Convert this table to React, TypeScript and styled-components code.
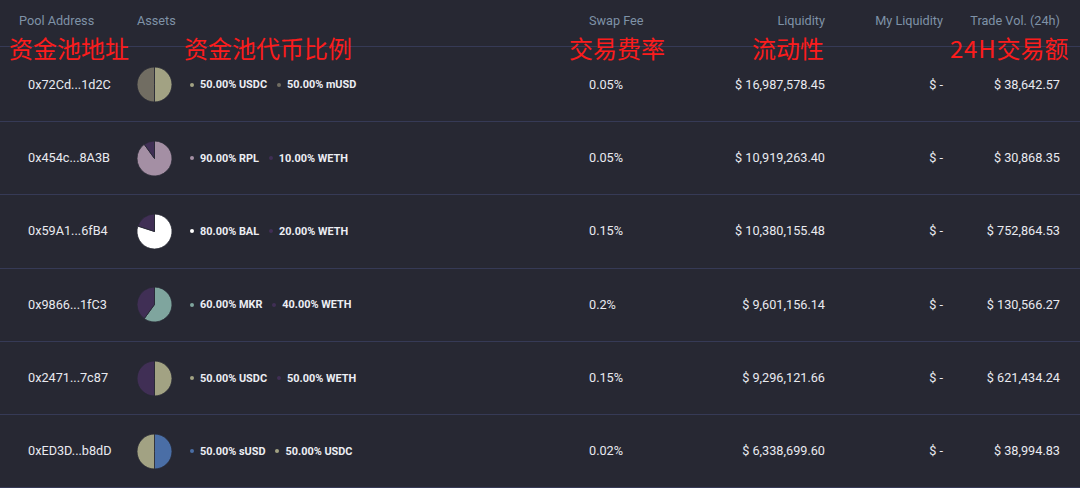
import React from "react";
import styled, { createGlobalStyle } from "styled-components";

const GlobalStyle = createGlobalStyle`
  html, body { margin: 0; padding: 0; background: #272833; }
  body { font-family: Roboto, "Noto Sans", sans-serif; -webkit-font-smoothing: antialiased; }
`;

const COLS = "137px 452px 111px 125px 118px 117px 20px";

const Page = styled.div`
  position: relative;
  width: 1080px;
  height: 488px;
  overflow: hidden;
  background: #272833;
`;

const HeaderRow = styled.div`
  display: grid;
  grid-template-columns: ${COLS};
  height: 47px;
  box-sizing: border-box;
  padding-top: 13px;
  border-bottom: 1px solid #363a56;
`;

const HeadCell = styled.div<{ $align?: "left" | "right"; $pad?: number }>`
  font-size: 12.7px;
  line-height: 16px;
  color: #7f92a7;
  text-align: ${(p) => p.$align ?? "left"};
  padding-left: ${(p) => p.$pad ?? 0}px;
  white-space: nowrap;
`;

const Row = styled.div`
  display: grid;
  grid-template-columns: ${COLS};
  align-items: center;
  height: 73.3px;
  box-sizing: border-box;
  border-bottom: 1px solid #363a56;
  ${HeaderRow} + & { height: 75px; padding-top: 1px; }
  &:last-child { border-bottom: none; }
`;

const Cell = styled.div<{ $align?: "left" | "right"; $pad?: number }>`
  font-size: 12.7px;
  line-height: 16px;
  color: #e9eaf0;
  text-align: ${(p) => p.$align ?? "left"};
  padding-left: ${(p) => p.$pad ?? 0}px;
  white-space: nowrap;
`;

const AssetsCell = styled.div`
  display: flex;
  align-items: center;
  gap: 18px;
`;

const Legend = styled.div`
  display: flex;
  align-items: center;
  gap: 10px;
`;

const LegendItem = styled.div`
  display: flex;
  align-items: center;
  gap: 6px;
  font-size: 10.9px;
  font-weight: 700;
  color: #eceef3;
  white-space: nowrap;
`;

const Dot = styled.span<{ $color: string }>`
  width: 4px;
  height: 4px;
  border-radius: 50%;
  background: ${(p) => p.$color};
`;

const Overlay = styled.div`
  position: absolute;
  inset: 0;
  pointer-events: none;
`;

const Note = styled.div<{ $x: number }>`
  position: absolute;
  top: 35px;
  left: ${(p) => p.$x}px;
  font-family: "Noto Sans CJK SC", "Noto Sans", sans-serif;
  font-size: 24px;
  line-height: 26px;
  color: #fb1c1c;
  white-space: nowrap;
`;

const Latin = styled.span`
  letter-spacing: 0.8px;
`;

type Asset = { pct: number; sym: string; color: string };
type Pool = { addr: string; assets: Asset[]; fee: string; liq: string; vol: string };

const C = {
  usdc: "#a2a283",
  musd: "#716d62",
  rpl: "#a48fa4",
  weth: "#402f55",
  bal: "#ffffff",
  mkr: "#7fa59e",
  susd: "#4a6ea6",
};

const pools: Pool[] = [
  { addr: "0x72Cd...1d2C", assets: [{ pct: 50, sym: "USDC", color: C.usdc }, { pct: 50, sym: "mUSD", color: C.musd }], fee: "0.05%", liq: "$ 16,987,578.45", vol: "$ 38,642.57" },
  { addr: "0x454c...8A3B", assets: [{ pct: 90, sym: "RPL", color: C.rpl }, { pct: 10, sym: "WETH", color: C.weth }], fee: "0.05%", liq: "$ 10,919,263.40", vol: "$ 30,868.35" },
  { addr: "0x59A1...6fB4", assets: [{ pct: 80, sym: "BAL", color: C.bal }, { pct: 20, sym: "WETH", color: C.weth }], fee: "0.15%", liq: "$ 10,380,155.48", vol: "$ 752,864.53" },
  { addr: "0x9866...1fC3", assets: [{ pct: 60, sym: "MKR", color: C.mkr }, { pct: 40, sym: "WETH", color: C.weth }], fee: "0.2%", liq: "$ 9,601,156.14", vol: "$ 130,566.27" },
  { addr: "0x2471...7c87", assets: [{ pct: 50, sym: "USDC", color: C.usdc }, { pct: 50, sym: "WETH", color: C.weth }], fee: "0.15%", liq: "$ 9,296,121.66", vol: "$ 621,434.24" },
  { addr: "0xED3D...b8dD", assets: [{ pct: 50, sym: "sUSD", color: C.susd }, { pct: 50, sym: "USDC", color: C.usdc }], fee: "0.02%", liq: "$ 6,338,699.60", vol: "$ 38,994.83" },
];

function Pie({ assets }: { assets: Asset[] }) {
  const r = 17.5;
  const cx = 17.5;
  const cy = 17.5;
  let start = 0;
  const pt = (deg: number) => {
    const a = ((deg - 90) * Math.PI) / 180;
    return [cx + r * Math.cos(a), cy + r * Math.sin(a)];
  };
  return (
    <svg width="35" height="35" viewBox="0 0 35 35">
      {assets.map((a, i) => {
        const sweep = (a.pct / 100) * 360;
        const [x1, y1] = pt(start);
        const [x2, y2] = pt(start + sweep);
        const large = sweep > 180 ? 1 : 0;
        const d = `M ${cx} ${cy} L ${x1} ${y1} A ${r} ${r} 0 ${large} 1 ${x2} ${y2} Z`;
        start += sweep;
        return <path key={i} d={d} fill={a.color} stroke="#272833" strokeWidth="0.8" strokeLinejoin="round" />;
      })}
    </svg>
  );
}

export default function App() {
  return (
    <Page>
      <GlobalStyle />
      <HeaderRow>
        <HeadCell $pad={19}>Pool Address</HeadCell>
        <HeadCell>Assets</HeadCell>
        <HeadCell>Swap Fee</HeadCell>
        <HeadCell $align="right">Liquidity</HeadCell>
        <HeadCell $align="right">My Liquidity</HeadCell>
        <HeadCell $align="right">Trade Vol. (24h)</HeadCell>
        <div />
      </HeaderRow>
      {pools.map((p) => (
        <Row key={p.addr}>
          <Cell $pad={28}>{p.addr}</Cell>
          <AssetsCell>
            <Pie assets={p.assets} />
            <Legend>
              {p.assets.map((a) => (
                <LegendItem key={a.sym}>
                  <Dot $color={a.color} />
                  {a.pct.toFixed(2)}% {a.sym}
                </LegendItem>
              ))}
            </Legend>
          </AssetsCell>
          <Cell>{p.fee}</Cell>
          <Cell $align="right">{p.liq}</Cell>
          <Cell $align="right">$ -</Cell>
          <Cell $align="right">{p.vol}</Cell>
          <div />
        </Row>
      ))}
      <Overlay>
        <Note $x={9}>资金池地址</Note>
        <Note $x={184}>资金池代币比例</Note>
        <Note $x={569}>交易费率</Note>
        <Note $x={752}>流动性</Note>
        <Note $x={950}><Latin>24H</Latin>交易额</Note>
      </Overlay>
    </Page>
  );
}
